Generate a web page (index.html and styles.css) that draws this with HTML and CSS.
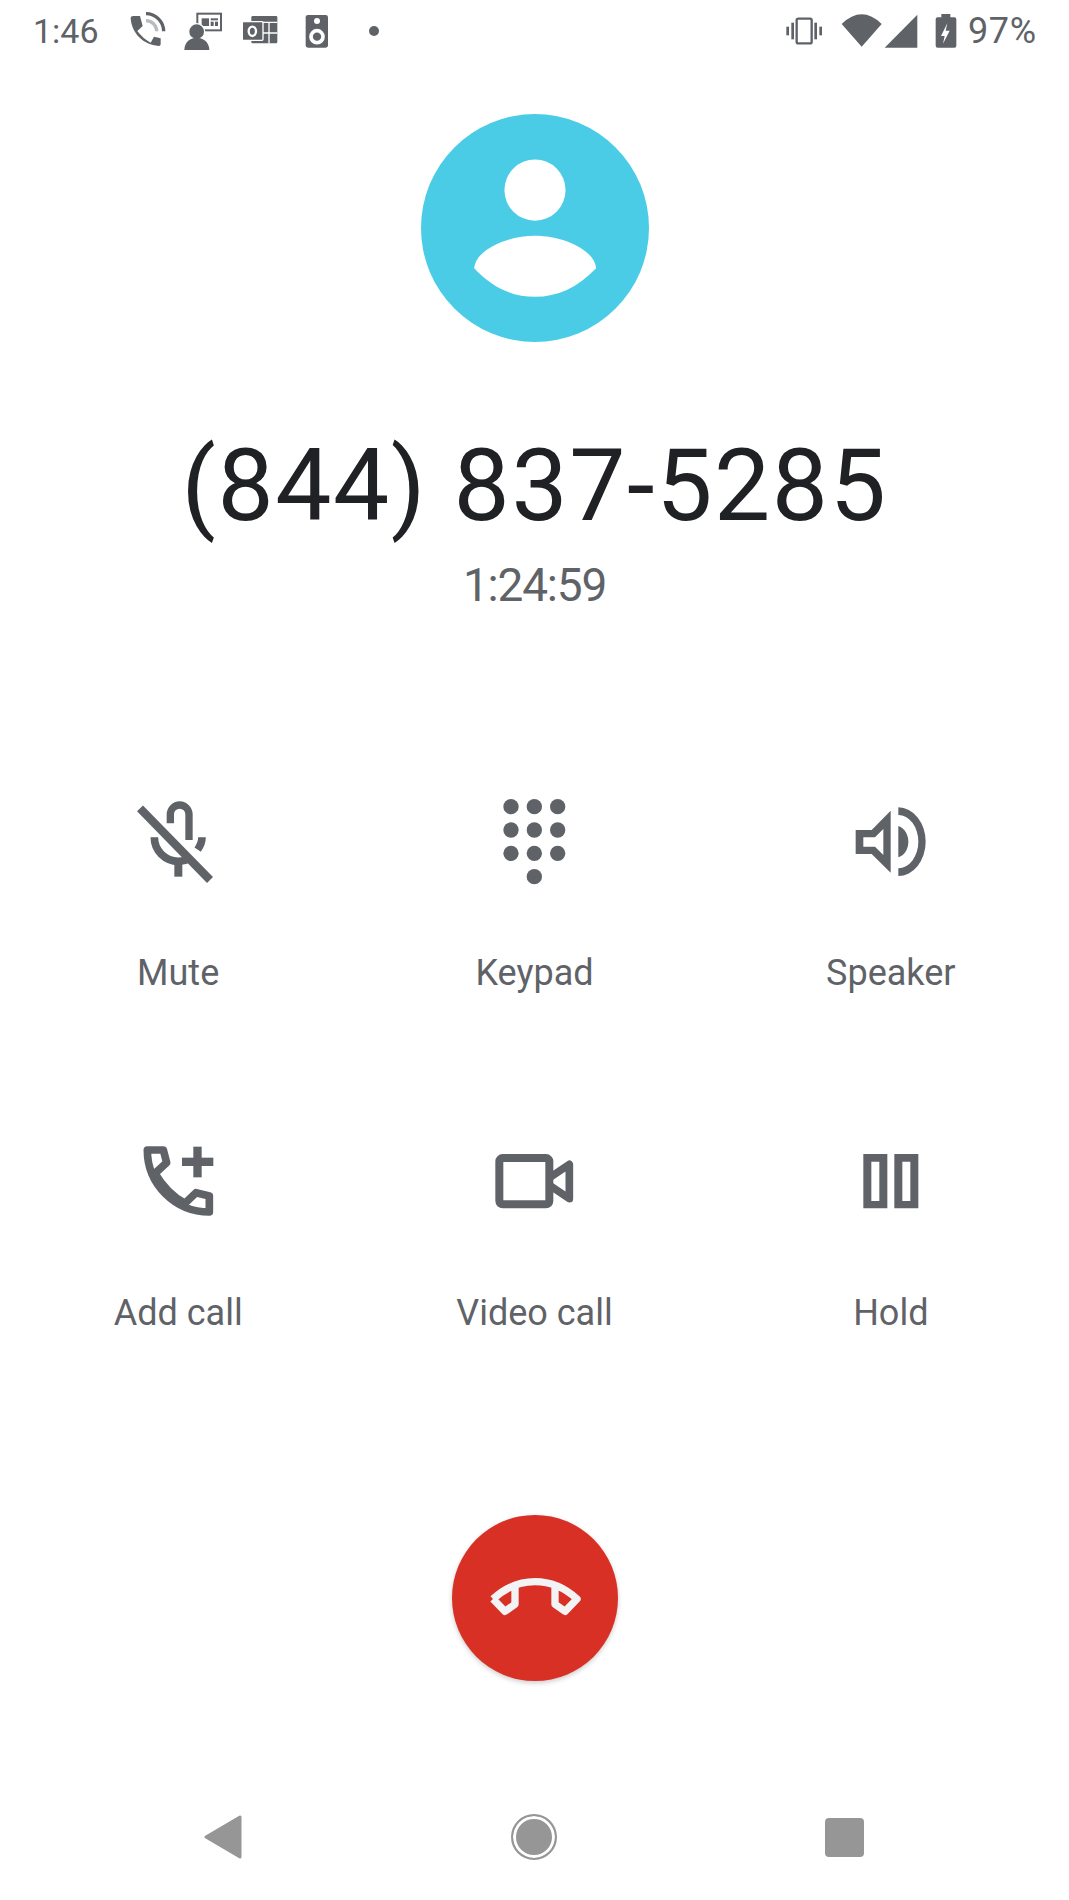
FILE: index.html
```html
<!DOCTYPE html>
<html lang="en">
<head>
  <meta charset="UTF-8">
  <title>Call</title>
  <link rel="stylesheet" href="styles.css">
</head>
<body>
<div class="page">

  <!-- status bar -->
  <div class="status">
    <div class="status-group">
      <span class="time">1:46</span>
      <svg class="st ic-call" viewBox="390 30 111 126">
        <path class="fill" d="M400 48H420L428 78L412 93Q428 115 452 128L462 110L482 115V133Q482 138 476 138C430 135 395 100 392 55Q392 48 400 48Z"/>
        <path class="line" d="M438 41A53 53 0 0 1 491 94" stroke-width="10"/>
        <path class="line faint" d="M438 62A32 32 0 0 1 470 94" stroke-width="10"/>
      </svg>
      <svg class="st ic-person" viewBox="552 30 114 126">
        <rect class="line" x="592" y="41" width="71" height="50" stroke-width="6"/>
        <rect class="fill" x="605" y="55" width="22" height="23"/>
        <rect class="fill" x="632" y="55" width="22" height="6"/>
        <rect class="fill" x="632" y="65" width="9" height="13"/>
        <rect class="fill" x="645" y="65" width="9" height="13"/>
        <circle class="fill cut" cx="590" cy="95" r="24"/>
        <path class="fill" d="M553 150C553 125 572 113 590 113C608 113 628 125 628 150Z"/>
      </svg>
      <svg class="st ic-office" viewBox="727 30 108 126">
        <rect class="fill" x="755" y="48" width="78" height="82" rx="4"/>
        <path class="line white" d="M755 67H833M808 67V130M790 99H833" stroke-width="4"/>
        <rect class="fill cut" x="728" y="65" width="62" height="56" rx="3"/>
        <ellipse class="line white" cx="758" cy="94" rx="11" ry="14" stroke-width="7"/>
      </svg>
      <svg class="st ic-speaker" viewBox="916 30 72 126">
        <rect class="fill" x="918" y="45" width="67" height="98" rx="7"/>
        <circle class="white-fill" cx="952" cy="63" r="9"/>
        <circle class="line white" cx="952" cy="110" r="18" stroke-width="11"/>
      </svg>
      <span class="dot"></span>
    </div>
    <div class="status-group">
      <svg class="st ic-vibrate" viewBox="76 30 114 126">
        <rect class="line" x="111" y="56" width="45" height="74" rx="5" stroke-width="7"/>
        <rect class="fill" x="95" y="68" width="8" height="50"/>
        <rect class="fill" x="80" y="80" width="8" height="26"/>
        <rect class="fill" x="164" y="68" width="8" height="50"/>
        <rect class="fill" x="179" y="80" width="8" height="26"/>
      </svg>
      <svg class="st ic-wifi" viewBox="243 30 123 126">
        <path class="fill" d="M245 72Q305 14 365 72L305 140Z"/>
      </svg>
      <svg class="st ic-signal" viewBox="373 30 102 126">
        <path class="fill" d="M375 143L473 44V143Z"/>
      </svg>
      <svg class="st ic-battery" viewBox="526 30 66 126">
        <path class="fill" d="M545 42H572V52H584Q590 52 590 58V137Q590 143 584 143H534Q528 143 528 137V58Q528 52 534 52H545Z"/>
        <path class="white-fill" d="M563 70L544 108H555L550 131L570 92H558Z"/>
      </svg>
      <span class="battery">97%</span>
    </div>
  </div>

  <!-- caller -->
  <svg class="avatar" viewBox="60 42 686 686">
    <circle class="avatar-bg" cx="403" cy="385" r="343"/>
    <circle class="white-fill" cx="403" cy="271" r="92"/>
    <path class="white-fill" d="M220 506C224 450 320 408 403 408C486 408 582 450 587 506C530 565 470 592 403 592C336 592 275 565 220 506Z"/>
  </svg>
  <div class="number">(844) 837-5285</div>
  <div class="duration">1:24:59</div>

  <!-- call buttons -->
  <div class="actions">
    <div class="action">
      <svg class="action-icon" viewBox="69 51 270 270">
        <path class="line" d="M181 130V103a28 28 0 0 1 56 0V180" stroke-width="22"/>
        <path class="line" d="M133 172a72 72 0 0 0 72 72Q224 244 240 236" stroke-width="23"/>
        <path class="line" d="M276 172c0 12-4 24-13 37" stroke-width="23"/>
        <path class="line" d="M205 246V290" stroke-width="24"/>
        <path class="line" d="M90 85L300 300" stroke-width="25"/>
      </svg>
      <div class="label">Mute</div>
    </div>
    <div class="action">
      <svg class="action-icon" viewBox="57 51 270 270">
        <circle class="fill" cx="123" cy="80" r="23"/>
        <circle class="fill" cx="193" cy="80" r="23"/>
        <circle class="fill" cx="263" cy="80" r="23"/>
        <circle class="fill" cx="123" cy="150" r="23"/>
        <circle class="fill" cx="193" cy="150" r="23"/>
        <circle class="fill" cx="263" cy="150" r="23"/>
        <circle class="fill" cx="123" cy="220" r="23"/>
        <circle class="fill" cx="193" cy="220" r="23"/>
        <circle class="fill" cx="263" cy="220" r="23"/>
        <circle class="fill" cx="193" cy="290" r="23"/>
      </svg>
      <div class="label">Keypad</div>
    </div>
    <div class="action">
      <svg class="action-icon" viewBox="63 51 270 270">
        <path class="fill" fill-rule="evenodd" d="M92 150H140L197 92V278L140 222H92ZM115 172V200H150L175 225V147L150 172Z"/>
        <path class="fill" d="M220 138C240 145 250 165 250 185C250 205 240 225 220 232Z"/>
        <path class="fill" d="M220 82A82 103 0 0 1 220 288V265A60 80 0 0 0 220 105Z"/>
      </svg>
      <div class="label">Speaker</div>
    </div>
    <div class="action">
      <svg class="action-icon" viewBox="69 51 270 270">
        <path class="line round" d="M112 90H160L170 128L135 160Q170 220 225 250L258 218L298 228V276A186 186 0 0 1 112 90Z" stroke-width="23"/>
        <rect class="fill" x="216" y="113" width="94" height="25"/>
        <rect class="fill" x="250" y="80" width="25" height="92"/>
      </svg>
      <div class="label">Add call</div>
    </div>
    <div class="action">
      <svg class="action-icon" viewBox="57 51 270 270">
        <rect class="line" x="88" y="114" width="150" height="139" rx="10" stroke-width="24"/>
        <path class="line round" d="M240 172L298 133V236L240 197" stroke-width="23"/>
      </svg>
      <div class="label">Video call</div>
    </div>
    <div class="action">
      <svg class="action-icon" viewBox="63 51 270 270">
        <path class="fill" fill-rule="evenodd" d="M115 102H187V265H115ZM139 125V243H163V125Z"/>
        <path class="fill" fill-rule="evenodd" d="M208 102H280V265H208ZM232 125V243H256V125Z"/>
      </svg>
      <div class="label">Hold</div>
    </div>
  </div>

  <!-- end call -->
  <div class="end-call">
    <svg class="end-icon" viewBox="162 145 300 300">
      <path class="hangup" d="M186 298C225 262 270 246 312 246C354 246 399 262 438 298L402 335L372 314V262M252 262V314L222 335L186 298"/>
    </svg>
  </div>

  <!-- nav bar -->
  <div class="nav">
    <svg class="nav-back" viewBox="0 0 38 44">
      <path d="M36 2V42L2 22Z"/>
    </svg>
    <span class="nav-home"></span>
    <span class="nav-recent"></span>
  </div>

</div>
</body>
</html>
```

FILE: styles.css
```css
body {
  margin: 0;
  background-color: #ffffff;
  font-family: "Roboto", "Liberation Sans", sans-serif;
}
.page {
  width: 1069px;
  height: 1900px;
  display: flex;
  flex-direction: column;
  align-items: center;
  overflow: hidden;
}

/* status bar */
.status {
  width: 100%;
  height: 62px;
  box-sizing: border-box;
  padding: 0 32px 0 33px;
  display: flex;
  justify-content: space-between;
  align-items: center;
  color: #5f6368;
}
.status-group {
  display: flex;
  align-items: center;
}
.st {
  height: 42px;
  flex: none;
}
.time {
  width: 64px;
  font-size: 34px;
  line-height: 42px;
}
.battery {
  width: 69px;
  margin-left: 11px;
  font-size: 36px;
  line-height: 42px;
  letter-spacing: 0.6px;
}
.ic-call { width: 37px; margin-left: 33px; }
.ic-person { width: 38px; margin-left: 17px; }
.ic-office { width: 36px; margin-left: 20px; }
.ic-speaker { width: 24px; margin-left: 27px; }
.dot {
  width: 10px;
  height: 10px;
  margin-left: 40px;
  border-radius: 50%;
  background-color: #5f6368;
}
.ic-vibrate { width: 38px; }
.ic-wifi { width: 41px; margin-left: 18px; }
.ic-signal { width: 34px; margin-left: 2px; }
.ic-battery { width: 22px; margin-left: 17px; }

/* shared icon paints */
.fill {
  fill: #5f6368;
}
.line {
  fill: none;
  stroke: #5f6368;
}
.round {
  stroke-linejoin: round;
}
.faint {
  stroke: #b9bbbd;
}
.white {
  stroke: #ffffff;
}
.white-fill {
  fill: #ffffff;
}
.cut {
  stroke: #ffffff;
  stroke-width: 4;
}

/* caller */
.avatar {
  width: 228px;
  height: 228px;
  margin-top: 52px;
  flex: none;
}
.avatar-bg {
  fill: #4bcce6;
}
.number {
  margin-top: 84px;
  font-size: 100px;
  line-height: 120px;
  letter-spacing: 1.6px;
  color: #202124;
  white-space: nowrap;
}
.duration {
  margin-top: 9px;
  font-size: 46px;
  line-height: 60px;
  letter-spacing: -1.2px;
  color: #5f6368;
}

/* call buttons */
.actions {
  width: 100%;
  margin-top: 182px;
  display: grid;
  grid-template-columns: repeat(3, 1fr);
  row-gap: 139px;
}
.action {
  display: flex;
  flex-direction: column;
  align-items: center;
}
.action-icon {
  width: 90px;
  height: 90px;
}
.label {
  margin-top: 61px;
  font-size: 36px;
  line-height: 50px;
  color: #5f6368;
}

/* end call */
.end-call {
  width: 166px;
  height: 166px;
  margin-top: 177px;
  flex: none;
  display: flex;
  align-items: center;
  justify-content: center;
  border-radius: 50%;
  background-color: #d93025;
  box-shadow: 0 2px 5px rgba(0, 0, 0, 0.2);
}
.end-icon {
  width: 100px;
  height: 100px;
}
.hangup {
  fill: none;
  stroke: #f1f3f4;
  stroke-width: 22;
  stroke-linejoin: round;
}

/* nav bar */
.nav {
  width: 100%;
  height: 126px;
  margin-top: auto;
  box-sizing: border-box;
  padding: 0 205px 0 204px;
  display: flex;
  justify-content: space-between;
  align-items: center;
}
.nav-back {
  width: 38px;
  height: 44px;
}
.nav-back path {
  fill: #969696;
  stroke: #969696;
  stroke-width: 3;
  stroke-linejoin: round;
}
.nav-home {
  width: 46px;
  height: 46px;
  box-sizing: border-box;
  border: 2px solid #969696;
  border-radius: 50%;
  background-color: #969696;
  box-shadow: inset 0 0 0 3px #ffffff;
}
.nav-recent {
  width: 39px;
  height: 39px;
  border-radius: 4px;
  background-color: #969696;
}
```
